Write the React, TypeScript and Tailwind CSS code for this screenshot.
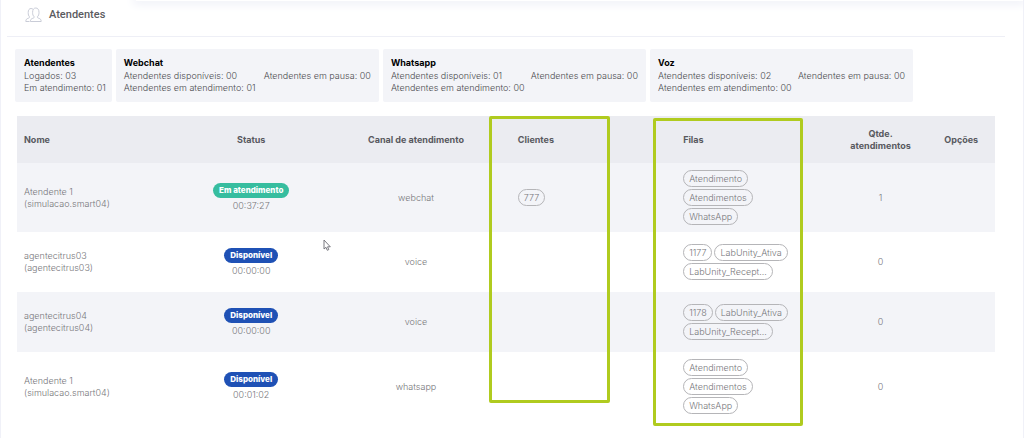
import { clsx } from "clsx"

type Attendant = {
  name: string
  login: string
  status: "busy" | "available"
  time: string
  channel: string
  clients: string[]
  queues: string[]
  total: number
}

const channels = [
  { title: "Webchat", available: "00", paused: "00", busy: "01" },
  { title: "Whatsapp", available: "01", paused: "00", busy: "00" },
  { title: "Voz", available: "02", paused: "00", busy: "00" },
]

const attendants: Attendant[] = [
  {
    name: "Atendente 1",
    login: "simulacao.smart04",
    status: "busy",
    time: "00:37:27",
    channel: "webchat",
    clients: ["777"],
    queues: ["Atendimento", "Atendimentos", "WhatsApp"],
    total: 1,
  },
  {
    name: "agentecitrus03",
    login: "agentecitrus03",
    status: "available",
    time: "00:00:00",
    channel: "voice",
    clients: [],
    queues: ["1177", "LabUnity_Ativa", "LabUnity_Recept..."],
    total: 0,
  },
  {
    name: "agentecitrus04",
    login: "agentecitrus04",
    status: "available",
    time: "00:00:00",
    channel: "voice",
    clients: [],
    queues: ["1178", "LabUnity_Ativa", "LabUnity_Recept..."],
    total: 0,
  },
  {
    name: "Atendente 1",
    login: "simulacao.smart04",
    status: "available",
    time: "00:01:02",
    channel: "whatsapp",
    clients: [],
    queues: ["Atendimento", "Atendimentos", "WhatsApp"],
    total: 0,
  },
]

const UsersIcon = () => (
  <svg width="17" height="16" viewBox="0 0 17 16" fill="none" stroke="#c3c6d2" strokeWidth="0.9" strokeLinejoin="round" aria-hidden="true">
    <path d="M4.500 14.500H.8c0-2 .8-2.700 2.400-3.200 1-.3 1.400-.7 1.300-1.500C3.500 8.800 3.200 7.500 3.200 5.500 3.200 3 4.200 1.500 6.100 1.500c.8 0 1.400.3 1.900.8" />
    <path d="M5.400 14.500h10.800c0-2-.8-2.700-2.400-3.200-1.100-.3-1.500-.7-1.400-1.500 1.200-1 1.600-2.400 1.600-4.400C14 2.800 12.900 1 10.800 1S7.600 2.800 7.600 5.400c0 2 .4 3.400 1.600 4.400.1.800-.3 1.200-1.400 1.500-1.600.5-2.400 1.200-2.400 3.200z" />
  </svg>
)

const Cursor = () => (
  <svg className="absolute left-[31.3%] top-[123px]" width="8" height="12" viewBox="0 0 8 12" aria-hidden="true">
    <path d="M1 1v9l2-1.700 1.300 3 1.500-.7-1.300-2.800H7.300z" fill="#fff" stroke="#6b6b73" strokeWidth="0.9" strokeLinejoin="round" />
  </svg>
)

const Chips = ({ items }: { items: string[] }) => (
  <div className="flex max-w-28 flex-wrap gap-x-0.5 gap-y-0.5">
    {items.map((item) => (
      <span key={item} className="h-[17px] rounded-full border border-[#b5b5b8] px-[5px] leading-[15px]">
        {item}
      </span>
    ))}
  </div>
)

const StatusBadge = ({ status }: { status: Attendant["status"] }) => (
  <span
    className={clsx(
      "inline-block h-[15px] rounded-full px-1.5 text-[8px] leading-[15px] font-extrabold text-white",
      status === "busy" ? "bg-[#36bd9f]" : "bg-[#1f51b5]"
    )}
  >
    {status === "busy" ? "Em atendimento" : "Disponível"}
  </span>
)

const Summary = () => (
  <section className="ml-3.5 mt-3 flex gap-1 text-[9px] leading-3 font-light text-[#4c4c50]">
    <div className="rounded-xs bg-[#f3f4f8] py-2 pr-1.5 pl-[9px]">
      <h2 className="mb-px font-bold text-black">Atendentes</h2>
      <p>Logados: 03</p>
      <p>Em atendimento: 01</p>
    </div>
    {channels.map((channel) => (
      <div key={channel.title} className="w-[26.1%] rounded-xs bg-[#f3f4f8] p-2">
        <h2 className="mb-px font-bold text-black">{channel.title}</h2>
        <div className="flex justify-between">
          <p>Atendentes disponíveis: {channel.available}</p>
          <p>Atendentes em pausa: {channel.paused}</p>
        </div>
        <p>Atendentes em atendimento: {channel.busy}</p>
      </div>
    ))}
  </section>
)

const AttendantsTable = () => (
  <table className="w-full table-fixed text-[9px] leading-3 font-light text-[#77777b]">
    <thead className="bg-[#ebecf1] font-semibold text-[#58595f]">
      <tr className="h-[47px]">
        <th className="w-[16.8%] px-[7px] text-left">Nome</th>
        <th className="w-[14.3%]">Status</th>
        <th className="w-[19.4%]">Canal de atendimento</th>
        <th className="w-[16.9%] px-[7px] text-left">Clientes</th>
        <th className="w-[16.1%] px-[7px] text-left">Filas</th>
        <th className="w-[9.6%] px-[7px]">Qtde. atendimentos</th>
        <th className="w-[6.9%]">Opções</th>
      </tr>
    </thead>
    <tbody>
      {attendants.map((item, index) => (
        <tr key={index} className="h-[60px] odd:bg-[#f3f4f8]">
          <td className="px-[7px]">
            {item.name}
            <br />({item.login})
          </td>
          <td className="text-center">
            <div className="flex flex-col items-center gap-0.5">
              <StatusBadge status={item.status} />
              <span>{item.time}</span>
            </div>
          </td>
          <td className="text-center">{item.channel}</td>
          <td className="px-[7px]">
            <Chips items={item.clients} />
          </td>
          <td className="px-[7px] py-[7px]">
            <Chips items={item.queues} />
          </td>
          <td className="text-center">{item.total}</td>
          <td />
        </tr>
      ))}
    </tbody>
  </table>
)

export default function App() {
  return (
    <main className="relative min-h-screen border-x border-[#f0f1f8] bg-white font-[Inter,sans-serif]">
      <div className="absolute top-0 right-0 left-[12%] h-3 overflow-hidden">
        <div className="ml-3 h-px shadow-[0_0_10px_3px_#eceef6]" />
      </div>
      <header className="relative ml-1.5 mr-[18px] flex h-[37px] items-center gap-[7px] border-b border-[#eeeff6] pb-1.5 pl-[18px]">
        <UsersIcon />
        <h1 className="font-[Roboto,sans-serif] text-[11px] font-medium text-[#5b5b60]">Atendentes</h1>
      </header>
      <Summary />
      <section className="relative mx-4 mt-3.5 mr-7">
        <AttendantsTable />
        <div className="absolute top-0 left-[48.3%] h-[287px] w-[12.3%] rounded-xs border-3 border-[#b0cb1f]" />
        <div className="absolute top-0.5 left-[65%] h-[308px] w-[15.4%] rounded-xs border-3 border-[#b0cb1f]" />
        <Cursor />
      </section>
    </main>
  )
}
